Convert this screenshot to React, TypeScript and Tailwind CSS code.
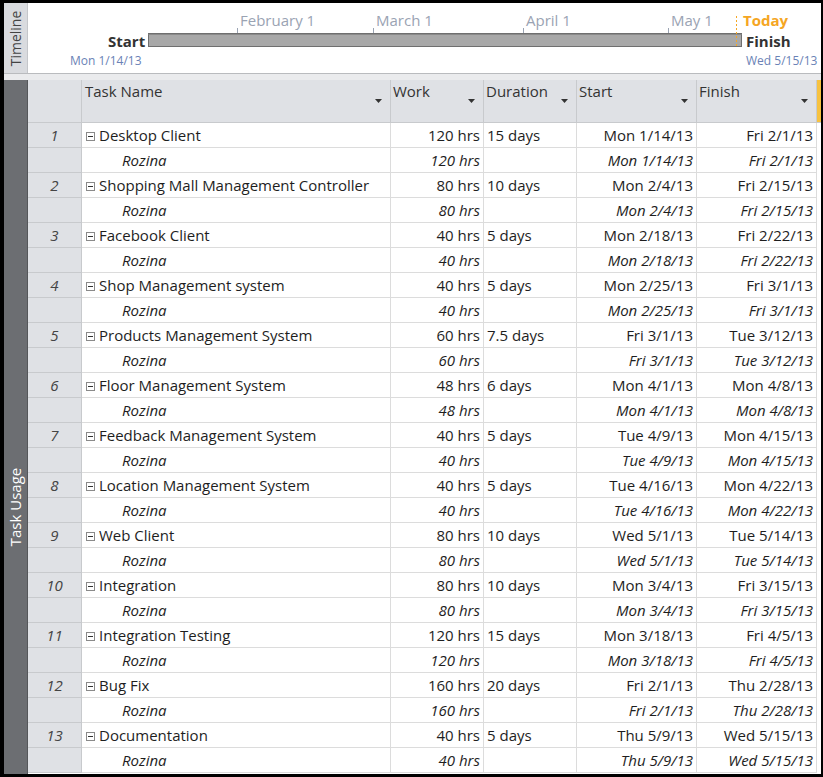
import React from "react";

type Task = {
    id: number;
    name: string;
    work: string;
    duration: string;
    start: string;
    finish: string;
};

const tasks: Task[] = [
    { id: 1, name: "Desktop Client", work: "120 hrs", duration: "15 days", start: "Mon 1/14/13", finish: "Fri 2/1/13" },
    { id: 2, name: "Shopping Mall Management Controller", work: "80 hrs", duration: "10 days", start: "Mon 2/4/13", finish: "Fri 2/15/13" },
    { id: 3, name: "Facebook Client", work: "40 hrs", duration: "5 days", start: "Mon 2/18/13", finish: "Fri 2/22/13" },
    { id: 4, name: "Shop Management system", work: "40 hrs", duration: "5 days", start: "Mon 2/25/13", finish: "Fri 3/1/13" },
    { id: 5, name: "Products Management System", work: "60 hrs", duration: "7.5 days", start: "Fri 3/1/13", finish: "Tue 3/12/13" },
    { id: 6, name: "Floor Management System", work: "48 hrs", duration: "6 days", start: "Mon 4/1/13", finish: "Mon 4/8/13" },
    { id: 7, name: "Feedback Management System", work: "40 hrs", duration: "5 days", start: "Tue 4/9/13", finish: "Mon 4/15/13" },
    { id: 8, name: "Location Management System", work: "40 hrs", duration: "5 days", start: "Tue 4/16/13", finish: "Mon 4/22/13" },
    { id: 9, name: "Web Client", work: "80 hrs", duration: "10 days", start: "Wed 5/1/13", finish: "Tue 5/14/13" },
    { id: 10, name: "Integration", work: "80 hrs", duration: "10 days", start: "Mon 3/4/13", finish: "Fri 3/15/13" },
    { id: 11, name: "Integration Testing", work: "120 hrs", duration: "15 days", start: "Mon 3/18/13", finish: "Fri 4/5/13" },
    { id: 12, name: "Bug Fix", work: "160 hrs", duration: "20 days", start: "Fri 2/1/13", finish: "Thu 2/28/13" },
    { id: 13, name: "Documentation", work: "40 hrs", duration: "5 days", start: "Thu 5/9/13", finish: "Wed 5/15/13" },
];

const cols = "grid grid-cols-[54px_309px_93px_93px_120px_120px_1fr]";

function Arrow() {
    return (
        <svg width="7" height="4" viewBox="0 0 7 4" className="absolute right-[8px] bottom-[19px]">
            <path d="M0 0 H7 L3.5 4 Z" fill="#333" />
        </svg>
    );
}

function Collapse() {
    return (
        <span className="inline-flex items-center justify-center w-[9px] h-[9px] border border-[#8a8a8a] bg-white mr-[4px] mb-[1px] align-middle">
            <span className="block w-[5px] h-px bg-[#333]" />
        </span>
    );
}

function Row({ task, sub }: { task: Task; sub?: boolean }) {
    const it = sub ? "italic" : "";
    return (
        <div className={`${cols} h-[25px] text-[15px] leading-[24px] text-[#1e1e1e]`}>
            <div className="bg-[#dfe1e5] border-b border-r border-[#c8cacd] text-center text-[#444] italic">
                {sub ? "" : task.id}
            </div>
            <div className={`bg-white border-b border-r border-[#dcdcdc] pl-[4px] whitespace-nowrap overflow-hidden ${it}`}>
                {sub ? <span className="pl-[36px]">Rozina</span> : <><Collapse />{task.name}</>}
            </div>
            <div className={`bg-white border-b border-r border-[#dcdcdc] text-right pr-[3px] ${it}`}>{task.work}</div>
            <div className={`bg-white border-b border-r border-[#dcdcdc] pl-[3px] ${it}`}>{sub ? "" : task.duration}</div>
            <div className={`bg-white border-b border-r border-[#dcdcdc] text-right pr-[3px] ${it}`}>{task.start}</div>
            <div className={`bg-white border-b border-r border-[#dcdcdc] text-right pr-[3px] ${it}`}>{task.finish}</div>
            <div className="bg-white" />
        </div>
    );
}

export default function App() {
    return (
        <div className="w-[823px] h-[777px] bg-black pt-[3px] pl-[4px] pr-[2px] pb-[3px] font-['Open_Sans',sans-serif] overflow-hidden">
            <div className="w-full h-full bg-white flex flex-col">

                <div className="flex h-[70px]">
                    <div className="w-[24px] bg-[#d9dbdf] border-r border-[#c4c6ca] flex items-center justify-center">
                        <span className="-rotate-90 text-[14px] text-[#444] whitespace-nowrap">Timeline</span>
                    </div>
                    <div className="relative flex-1 bg-white">
                        <span className="absolute left-[212px] top-[6px] text-[15px] text-[#9aa3b3]">February 1</span>
                        <span className="absolute left-[348px] top-[6px] text-[15px] text-[#9aa3b3]">March 1</span>
                        <span className="absolute left-[498px] top-[6px] text-[15px] text-[#9aa3b3]">April 1</span>
                        <span className="absolute left-[643px] top-[6px] text-[15px] text-[#9aa3b3]">May 1</span>
                        <span className="absolute left-[715px] top-[6px] text-[15px] font-bold text-[#f5a623]">Today</span>

                        <svg className="absolute left-0 top-0" width="792" height="70">
                            <line x1="209.5" y1="25" x2="209.5" y2="31" stroke="#9aa3b3" />
                            <line x1="345.5" y1="25" x2="345.5" y2="31" stroke="#9aa3b3" />
                            <line x1="495.5" y1="25" x2="495.5" y2="31" stroke="#9aa3b3" />
                            <line x1="640.5" y1="25" x2="640.5" y2="31" stroke="#9aa3b3" />
                            <rect x="120.5" y="30.5" width="593" height="13" fill="#a8a8a8" stroke="#6f6f6f" />
                            <line x1="120.5" y1="31.5" x2="713.5" y2="31.5" stroke="#8a8a8a" />
                            <line x1="708.5" y1="13" x2="708.5" y2="43" stroke="#f5a623" strokeDasharray="2 2" />
                        </svg>

                        <span className="absolute left-[80px] top-[27px] text-[15px] font-bold text-[#333]">Start</span>
                        <span className="absolute left-[718px] top-[27px] text-[15px] font-bold text-[#333]">Finish</span>
                        <span className="absolute left-[42px] top-[49px] text-[12px] text-[#6a82b6]">Mon 1/14/13</span>
                        <span className="absolute left-[718px] top-[49px] text-[12px] text-[#6a82b6]">Wed 5/15/13</span>
                    </div>
                </div>

                <div className="h-[7px] border-t border-[#b9bbbe] bg-[#eaebed]" />

                <div className="flex flex-1 min-h-0">
                    <div className="w-[24px] bg-[#6c6e72] border-r border-[#55575a] flex justify-center pt-[416px]">
                        <span className="-rotate-90 text-[15px] text-white whitespace-nowrap h-[22px]">Task Usage</span>
                    </div>
                    <div className="flex-1 flex flex-col overflow-hidden">
                        <div className={`${cols} h-[43px] bg-[#dfe1e5] text-[15px] text-[#333] leading-[22px]`}>
                            <div className="border-b border-r border-[#c8cacd]" />
                            <div className="relative border-b border-r border-[#c8cacd] pl-[3px]">Task Name<Arrow /></div>
                            <div className="relative border-b border-r border-[#c8cacd] pl-[2px]">Work<Arrow /></div>
                            <div className="relative border-b border-r border-[#c8cacd] pl-[2px]">Duration<Arrow /></div>
                            <div className="relative border-b border-r border-[#c8cacd] pl-[2px]">Start<Arrow /></div>
                            <div className="relative border-b border-r border-[#c8cacd] pl-[2px]">Finish<Arrow /></div>
                            <div className="bg-[#f7c240] border-b border-[#c8cacd]" />
                        </div>
                        {tasks.map((t) => (
                            <React.Fragment key={t.id}>
                                <Row task={t} />
                                <Row task={t} sub />
                            </React.Fragment>
                        ))}
                    </div>
                </div>

            </div>
        </div>
    );
}
